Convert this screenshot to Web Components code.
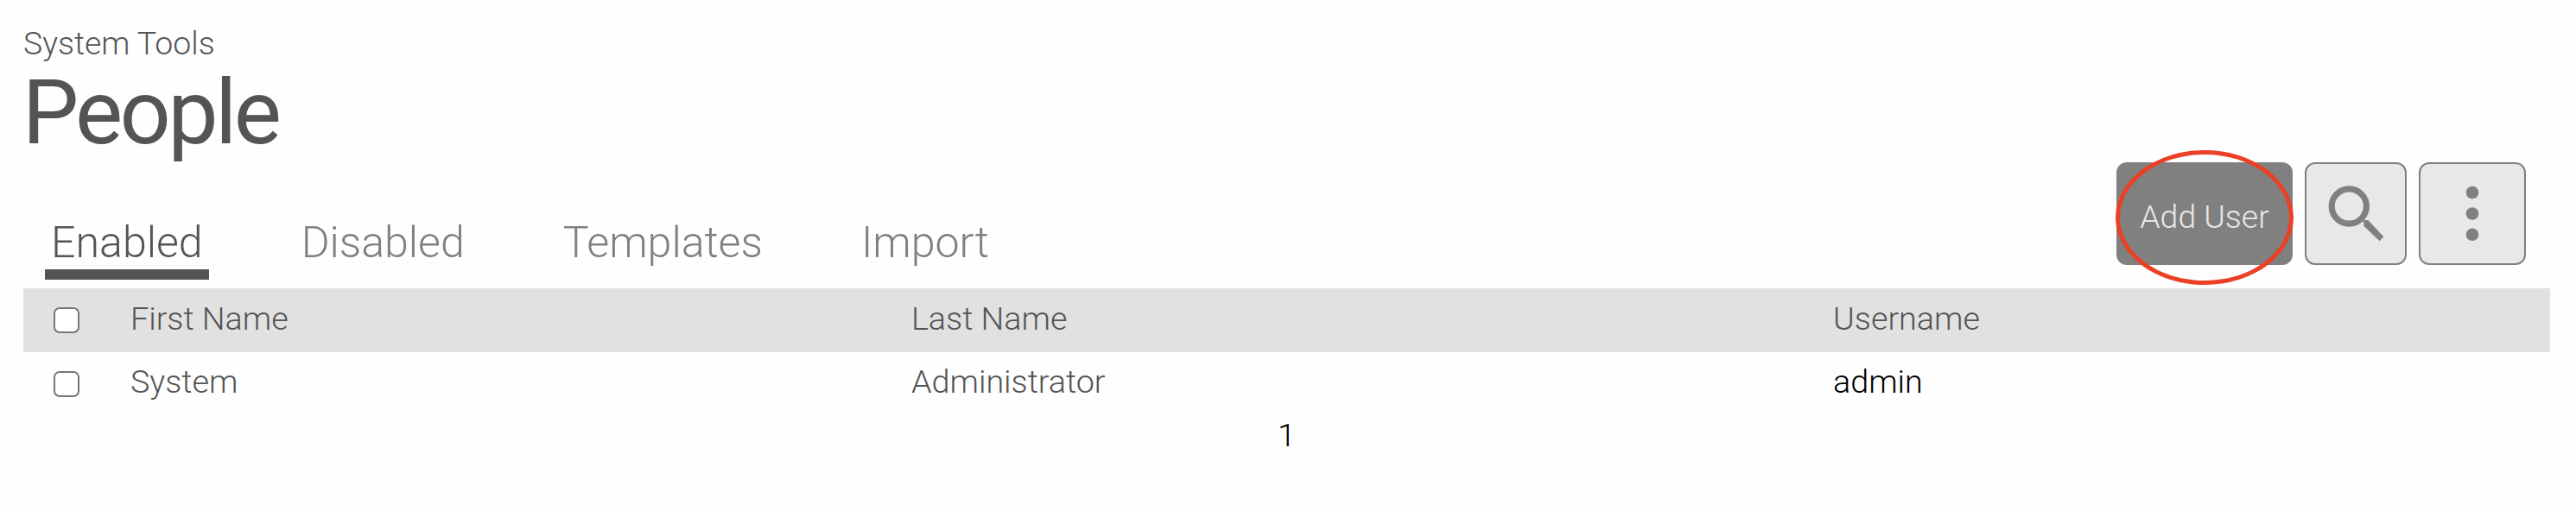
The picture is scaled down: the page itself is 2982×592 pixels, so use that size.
<!DOCTYPE html>
<html lang="en">
<head>
<meta charset="utf-8">
<title>People</title>
<style>
  body { margin: 0; background: #fefefe; font: 320 37.7px/40px Roboto, "Liberation Sans", sans-serif; color: #545454; }
</style>
</head>
<body>
<people-page></people-page>

<script>
const define = (name, html) => customElements.define(name, class extends HTMLElement {
  constructor() {
    super();
    const t = document.createElement('template');
    t.innerHTML = html;
    this.attachShadow({ mode: 'open' }).append(t.content.cloneNode(true));
  }
});

define('page-heading', `
  <style>
    :host { display: block; height: 158px; }
    .crumb { font-size: 37.4px; height: 40px; }
    h1 { margin: 11px 0 0 -1.3px; font-size: 104px; font-weight: 400; line-height: 100px; letter-spacing: -3.6px; }
  </style>
  <div class="crumb"><slot name="crumb"></slot></div>
  <h1><slot></slot></h1>`);

define('tab-item', `
  <style>
    :host { display: block; box-sizing: border-box; height: 73px; padding: 0 7px 0 7px; font-size: 50.1px; line-height: 60px;
            color: #808080; border-bottom: 12px solid transparent; white-space: nowrap; }
    :host([active]) { color: #545454; border-color: #545454; }
  </style>
  <slot></slot>`);

define('tab-list', `
  <style>:host { display: flex; gap: 100px; padding-left: 25px; }</style>
  <slot></slot>`);

define('tool-button', `
  <style>
    :host { display: flex; box-sizing: border-box; width: 118px; height: 119px; border: 2px solid #808080; border-radius: 12px;
            background: #e8e8e8; color: #808080; align-items: center; justify-content: center; position: relative; }
    :host([wide]) { width: 124px; }
    :host([primary]) { width: 204px; background: #808080; color: #e8e8e8; font-size: 37.4px; padding-top: 7px; }
  </style>
  <slot></slot>`);

define('search-icon', `
  <style>:host, svg { display: block; }</style>
  <svg width="114" height="115" viewBox="2 2 114 115">
    <circle cx="51.3" cy="51" r="20.1" fill="none" stroke="#808080" stroke-width="7.2"/>
    <path d="M66 67.5 68.5 67H73.3L91.3 86.3 86.6 91.3 68.3 73.7V69Z" fill="#808080"/>
  </svg>`);

define('more-icon', `
  <style>:host, svg { display: block; }</style>
  <svg width="120" height="115" viewBox="2 2 120 115" fill="#808080">
    <circle cx="62" cy="35" r="7.3"/><circle cx="62" cy="59.5" r="7.3"/><circle cx="62" cy="83.8" r="7.3"/>
  </svg>`);

define('highlight-ring', `
  <style>
    :host { position: absolute; left: -2.7px; top: -16px; box-sizing: border-box; width: 205.4px; height: 156px;
            border: 5.2px solid #eb4025; border-radius: 50%; }
  </style>`);

define('check-box', `
  <style>
    :host { display: block; box-sizing: border-box; width: 30px; height: 30px; border: 2px solid #767676; border-radius: 7px; background: #fff; }
  </style>`);

define('table-row', `
  <style>
    :host { display: grid; grid-template-columns: 124px 904px 1067px 1fr; height: 74px; box-sizing: border-box; align-items: start; padding-top: 14px; }
    :host([head]) { background: #e1e1e1; padding-top: 15px; }
    check-box { margin: 8px 0 0 35px; }
    :host([head]) check-box { margin-top: 7px; }
  </style>
  <check-box></check-box>
  <slot></slot>`);

define('page-number', `
  <style>:host { display: block; text-align: center; color: #000; padding-top: 2px; }</style>
  <slot></slot>`);

define('people-page', `
  <style>
    :host { display: block; box-sizing: border-box; height: 592px; padding: 30px 30px 0 27px; overflow: hidden; }
    .bar { display: flex; height: 136px; justify-content: space-between; margin-bottom: 10px; }
    tab-list { align-self: flex-end; }
    .tools { display: flex; gap: 14px; padding-right: 28px; }
    .dark { color: #000; }
  </style>
  <page-heading><span slot="crumb">System Tools</span>People</page-heading>
  <div class="bar">
    <tab-list>
      <tab-item active>Enabled</tab-item><tab-item>Disabled</tab-item><tab-item>Templates</tab-item><tab-item>Import</tab-item>
    </tab-list>
    <div class="tools">
      <tool-button primary><span>Add User</span><highlight-ring></highlight-ring></tool-button>
      <tool-button><search-icon></search-icon></tool-button>
      <tool-button wide><more-icon></more-icon></tool-button>
    </div>
  </div>
  <table-row head><span>First Name</span><span>Last Name</span><span>Username</span></table-row>
  <table-row><span>System</span><span>Administrator</span><span class="dark">admin</span></table-row>
  <page-number>1</page-number>`);
</script>
</body>
</html>
